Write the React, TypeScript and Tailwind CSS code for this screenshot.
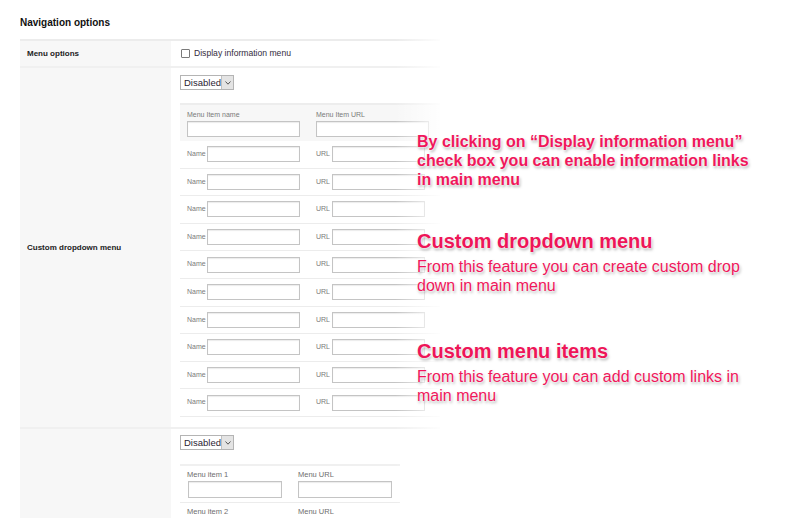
import React from "react";

const Input = ({ w, h = 16 }: { w: number; h?: number }) => (
  <div
    className="bg-white border border-[#c4c4c4] shadow-[inset_0_1px_1px_rgba(0,0,0,0.08)]"
    style={{ width: w, height: h }}
  />
);

const Select = () => (
  <div className="flex h-[15px] w-[54px] border border-[#b4b4b4] bg-white">
    <div className="flex-1 flex items-center pl-[3px] text-[9.5px] leading-none text-[#2a2433]">Disabled</div>
    <div className="w-[12px] bg-[#e4e4e4] border-l border-[#c0c0c0] flex items-center justify-center">
      <svg width="6" height="4" viewBox="0 0 6 4">
        <path d="M0.5 0.5 L3 3.2 L5.5 0.5" fill="none" stroke="#555" strokeWidth="1" />
      </svg>
    </div>
  </div>
);

const shadow =
  "[text-shadow:0_0_2px_#fff,0_0_3px_#fff,1px_2px_3px_rgba(0,0,0,0.35)]";

export default function App() {
  const rows = Array.from({ length: 10 });
  return (
    <div className="relative w-[800px] h-[518px] overflow-hidden bg-white font-['Liberation_Sans',Arial,sans-serif]">
      <div className="pl-[20px] pt-[17px]">
        <div className="text-[10px] leading-[12px] font-bold text-[#111]">Navigation options</div>
        <div className="mt-[10px] w-[420px]">
          {/* Row 1 */}
          <div className="flex h-[27px] border-t-2 border-[#ececec]">
            <div className="w-[151px] bg-[#f7f7f7] flex items-center pl-[7px] text-[8px] font-bold text-[#222]">
              Menu options
            </div>
            <div className="flex items-center pl-[10px]">
              <div className="w-[9px] h-[9px] border border-[#7a7a7a] bg-white rounded-[1px]" />
              <span className="ml-[4px] text-[8.6px] text-[#332c3c]">Display information menu</span>
            </div>
          </div>
          {/* Row 2 */}
          <div className="flex h-[361px] border-t-2 border-[#f0f0f0]">
            <div className="w-[151px] bg-[#f7f7f7] flex items-center pl-[7px] text-[8px] font-bold text-[#222]">
              Custom dropdown menu
            </div>
            <div className="pl-[9px] pt-[7px]">
              <Select />
              <div className="mt-[13px] w-[260px]">
                <div className="bg-[#f7f7f7] border-t-2 border-[#ededed] h-[38px] flex pt-[5px]">
                  <div className="w-[136px] pl-[7px]">
                    <div className="text-[7px] leading-[10px] text-[#7a7a7a]">Menu Item name</div>
                    <div className="mt-[1px]"><Input w={113} /></div>
                  </div>
                  <div>
                    <div className="text-[7px] leading-[10px] text-[#7a7a7a]">Menu Item URL</div>
                    <div className="mt-[1px]"><Input w={113} /></div>
                  </div>
                </div>
                {rows.map((_, i) => (
                  <div key={i} className="h-[27.6px] flex items-center border-b border-[#ececec]">
                    <div className="w-[136px] pl-[7px] flex items-center">
                      <span className="w-[20px] text-[7px] text-[#7a7a7a]">Name</span>
                      <Input w={93} />
                    </div>
                    <div className="flex items-center">
                      <span className="w-[16px] text-[7px] text-[#7a7a7a]">URL</span>
                      <Input w={93} />
                    </div>
                  </div>
                ))}
              </div>
            </div>
          </div>
          {/* Row 3 */}
          <div className="flex h-[100px] border-t-2 border-[#f0f0f0]">
            <div className="w-[151px] bg-[#f7f7f7]" />
            <div className="pl-[9px] pt-[6px]">
              <Select />
              <div className="mt-[14px] w-[220px] border-t-2 border-[#f0f0f0]">
                {[1, 2].map((n) => (
                  <div key={n} className="h-[37px] flex pt-[4px] border-b border-[#ececec]">
                    <div className="w-[118px] pl-[7px]">
                      <div className="text-[7.5px] leading-[10px] text-[#6e6e6e]">Menu item {n}</div>
                      <div className="mt-[1px] ml-[1px]"><Input w={94} h={17} /></div>
                    </div>
                    <div>
                      <div className="text-[7.5px] leading-[10px] text-[#6e6e6e]">Menu URL</div>
                      <div className="mt-[1px]"><Input w={94} h={17} /></div>
                    </div>
                  </div>
                ))}
              </div>
            </div>
          </div>
        </div>
      </div>

      {/* fade overlay */}
      <div className="absolute top-0 bottom-0 left-[395px] w-[50px] bg-gradient-to-r from-transparent to-white" />
      <div className="absolute top-0 bottom-0 left-[445px] right-0 bg-white" />

      {/* annotations */}
      <div className={`absolute left-[417px] top-[132px] text-[16px] leading-[19px] font-bold text-[#f0175b] ${shadow}`}>
        By clicking on “Display information menu”
        <br />
        check box you can enable information links
        <br />
        in main menu
      </div>
      <div className={`absolute left-[417px] top-[229px] text-[20px] leading-[24px] font-bold text-[#ee1558] ${shadow}`}>
        Custom dropdown menu
      </div>
      <div className={`absolute left-[417px] top-[257px] text-[16px] leading-[19px] text-[#f0175b] ${shadow}`}>
        From this feature you can create custom drop
        <br />
        down in main menu
      </div>
      <div className={`absolute left-[417px] top-[339px] text-[20px] leading-[24px] font-bold text-[#ee1558] ${shadow}`}>
        Custom menu items
      </div>
      <div className={`absolute left-[417px] top-[367px] text-[16px] leading-[19px] text-[#f0175b] ${shadow}`}>
        From this feature you can add custom links in
        <br />
        main menu
      </div>
    </div>
  );
}
